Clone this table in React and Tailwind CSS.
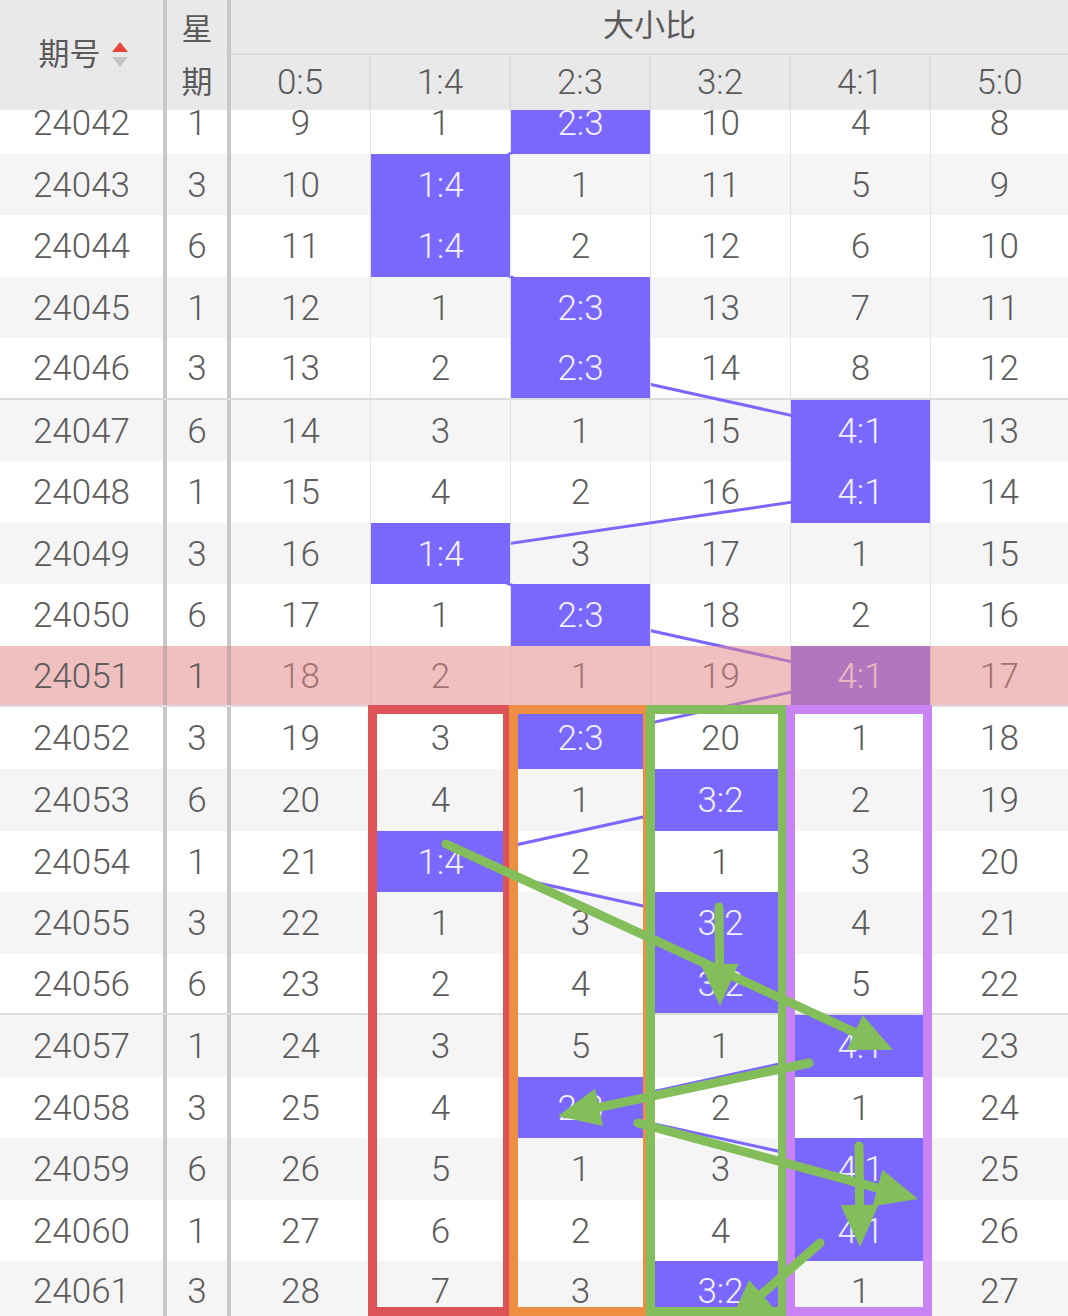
import React from 'react';

const ROW_H = 61.56;
const LABELS = ['0:5', '1:4', '2:3', '3:2', '4:1', '5:0'];

// null marks the hit column for that draw
const rows = [
  ['24042', 1, [9, 1, null, 10, 4, 8]],
  ['24043', 3, [10, null, 1, 11, 5, 9]],
  ['24044', 6, [11, null, 2, 12, 6, 10]],
  ['24045', 1, [12, 1, null, 13, 7, 11]],
  ['24046', 3, [13, 2, null, 14, 8, 12]],
  ['24047', 6, [14, 3, 1, 15, null, 13]],
  ['24048', 1, [15, 4, 2, 16, null, 14]],
  ['24049', 3, [16, null, 3, 17, 1, 15]],
  ['24050', 6, [17, 1, null, 18, 2, 16]],
  ['24051', 1, [18, 2, 1, 19, null, 17]],
  ['24052', 3, [19, 3, null, 20, 1, 18]],
  ['24053', 6, [20, 4, 1, null, 2, 19]],
  ['24054', 1, [21, null, 2, 1, 3, 20]],
  ['24055', 3, [22, 1, 3, null, 4, 21]],
  ['24056', 6, [23, 2, 4, null, 5, 22]],
  ['24057', 1, [24, 3, 5, 1, null, 23]],
  ['24058', 3, [25, 4, null, 2, 1, 24]],
  ['24059', 6, [26, 5, 1, 3, null, 25]],
  ['24060', 1, [27, 6, 2, 4, null, 26]],
  ['24061', 3, [28, 7, 3, null, 1, 27]],
];

const colCenter = (j) => 231 + 140 * j + 69.5;
const rowCenter = (i) => i * ROW_H + ROW_H / 2;

// green arrows, page coordinates
const arrows = [
  [446, 844, 893, 1050],
  [719, 907, 720, 1006],
  [809, 1063, 558, 1116],
  [638, 1123, 918, 1199],
  [859, 1146, 860, 1247],
  [820, 1243, 730, 1322],
];

function arrowParts(x1, y1, x2, y2) {
  const dx = x2 - x1;
  const dy = y2 - y1;
  const len = Math.hypot(dx, dy);
  const ux = dx / len;
  const uy = dy / len;
  const L = 42;
  const W = 19;
  const bx = x2 - ux * L;
  const by = y2 - uy * L;
  const nx = -uy;
  const ny = ux;
  return {
    line: [x1, y1, bx + ux * 6, by + uy * 6],
    head: `${x2},${y2} ${bx + nx * W},${by + ny * W} ${bx - nx * W},${by - ny * W}`,
  };
}

function SortIcon() {
  return (
    <svg width="18" height="32" viewBox="0 0 18 32">
      <polygon points="9,3 17,13 1,13" fill="#e8463d" />
      <polygon points="1,18 17,18 9,28" fill="#c4c4c4" />
    </svg>
  );
}

function Header() {
  return (
    <div className="flex h-[110px] bg-[#e9e9e9] text-[#5a5a5a]">
      <div className="w-[167px] border-r-4 border-[#c9c9c9] flex items-center justify-center gap-[10px] pl-[4px]">
        <span className="text-[31px]">期号</span>
        <SortIcon />
      </div>
      <div className="w-[64px] border-r-4 border-[#c9c9c9] flex flex-col items-center justify-center gap-[22px] pt-[2px] text-[31px] leading-none">
        <span>星</span>
        <span>期</span>
      </div>
      <div className="flex-1 flex flex-col">
        <div className="h-[55px] border-b-2 border-[#dadada] flex items-center justify-center text-[31px]">
          大小比
        </div>
        <div className="flex-1 flex pt-[2px]">
          {LABELS.map((l, j) => (
            <div
              key={l}
              className={
                j < 5
                  ? 'w-[140px] border-r-2 border-[#dcdcdc] flex items-center justify-center text-[35px] font-light'
                  : 'flex-1 flex items-center justify-center text-[35px] font-light'
              }
            >
              {l}
            </div>
          ))}
        </div>
      </div>
    </div>
  );
}

function Row({ row, index }) {
  const [period, week, vals] = row;
  const pink = period === '24051';
  const groupEnd = Number(period) % 5 === 1;
  const bg = pink ? 'bg-white' : index % 2 === 0 ? 'bg-white' : 'bg-[#f5f5f5]';
  return (
    <div
      className={`relative flex h-[61.56px] ${bg} ${groupEnd ? 'border-b-2 border-[#dcdcdc]' : ''}`}
    >
      <div
        className={`w-[167px] border-r-4 flex items-center justify-center pt-[3px] ${
          pink ? 'bg-[#f0c0c0] border-[#c9a9a9]' : 'border-[#c9c9c9]'
        }`}
      >
        {period}
      </div>
      <div
        className={`w-[64px] border-r-4 flex items-center justify-center pt-[3px] ${
          pink ? 'bg-[#f0c0c0] border-[#c9a9a9]' : 'border-[#c9c9c9]'
        }`}
      >
        {week}
      </div>
      {vals.map((v, j) => {
        const hit = v === null;
        const base = j < 5 ? 'w-[140px] border-r border-[#e4e4e4]' : 'flex-1';
        return (
          <div
            key={j}
            className={`${base} flex items-center justify-center pt-[3px] ${
              hit ? 'relative z-[2] bg-[#7a68fd] text-[#f3f0ff]' : ''
            }`}
          >
            {hit ? LABELS[j] : v}
          </div>
        );
      })}
      {pink && (
        <div className="absolute top-0 bottom-0 left-[231px] right-0 z-[3] bg-[rgba(226,134,134,0.52)]" />
      )}
    </div>
  );
}

export default function App() {
  const hits = rows.map((r) => r[2].indexOf(null));
  const bodyH = rows.length * ROW_H;

  return (
    <div className="relative w-[1068px] h-[1316px] overflow-hidden bg-white text-[#5c5c5c] font-['Roboto','Noto_Sans_CJK_SC',sans-serif]">
      <Header />

      <div className="relative h-[1206px] overflow-hidden text-[35px] font-light">
        <div className="relative -mt-[18px]">
          {rows.map((r, i) => (
            <Row key={r[0]} row={r} index={i} />
          ))}
          <svg
            className="absolute left-0 top-0 z-[1] pointer-events-none"
            width="1068"
            height={bodyH}
          >
            {hits.slice(1).map((h, k) => (
              <line
                key={k}
                x1={colCenter(hits[k])}
                y1={rowCenter(k)}
                x2={colCenter(h)}
                y2={rowCenter(k + 1)}
                stroke="#7a68fd"
                strokeWidth="3"
              />
            ))}
          </svg>
        </div>
      </div>

      {/* column boxes */}
      <div className="absolute top-[705px] left-[368px] w-[144px] h-[611px] border-[9px] border-[#dc5358] z-[4]" />
      <div className="absolute top-[705px] left-[509px] w-[143px] h-[611px] border-[9px] border-[#ee8e42] z-[4]" />
      <div className="absolute top-[705px] left-[646px] w-[141px] h-[611px] border-[9px] border-[#83bd5c] z-[4]" />
      <div className="absolute top-[705px] left-[786px] w-[146px] h-[611px] border-[9px] border-[#c983f3] z-[4]" />

      <svg
        className="absolute left-0 top-0 z-[5] pointer-events-none"
        width="1068"
        height="1316"
        viewBox="0 0 1068 1316"
      >
        {arrows.map((a, k) => {
          const p = arrowParts(...a);
          return (
            <g key={k}>
              <line
                x1={p.line[0]}
                y1={p.line[1]}
                x2={p.line[2]}
                y2={p.line[3]}
                stroke="#83be5b"
                strokeWidth="9"
                strokeLinecap="round"
              />
              <polygon points={p.head} fill="#83be5b" />
            </g>
          );
        })}
      </svg>
    </div>
  );
}
